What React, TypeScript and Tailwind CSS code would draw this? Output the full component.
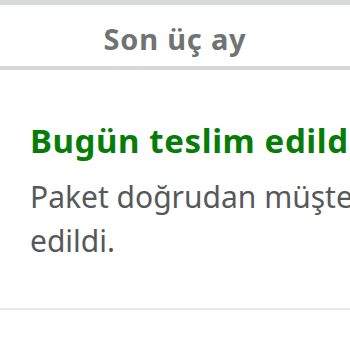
export default function App() {
  return (
    <div
      className="w-[350px] h-[350px] overflow-hidden bg-white"
      style={{ fontFamily: '"Noto Sans", "Open Sans", sans-serif' }}
    >
      <div className="h-[5px] bg-[#d5d9d9]" />
      <div className="h-[61px] flex items-center justify-center">
        <h2 className="text-[29px] font-bold text-[#6f7373] leading-none tracking-[0.8px] pt-[6px]">
          Son üç ay
        </h2>
      </div>
      <div className="h-[4px] bg-[#d5d9d9]" />
      <div className="w-[600px] pl-[30px] pr-4 pt-[51px] pb-[45px] border-b-2 border-[#e7e7e7]">
        <div className="text-[33px] font-bold text-[#067d06] leading-[40px] tracking-[0.6px] whitespace-nowrap">
          Bugün teslim edildi
        </div>
        <p className="mt-[14px] w-[480px] text-[30px] text-[#565959] leading-[44px]">
          Paket doğrudan müşteriye teslim edildi.
        </p>
      </div>
    </div>
  );
}
